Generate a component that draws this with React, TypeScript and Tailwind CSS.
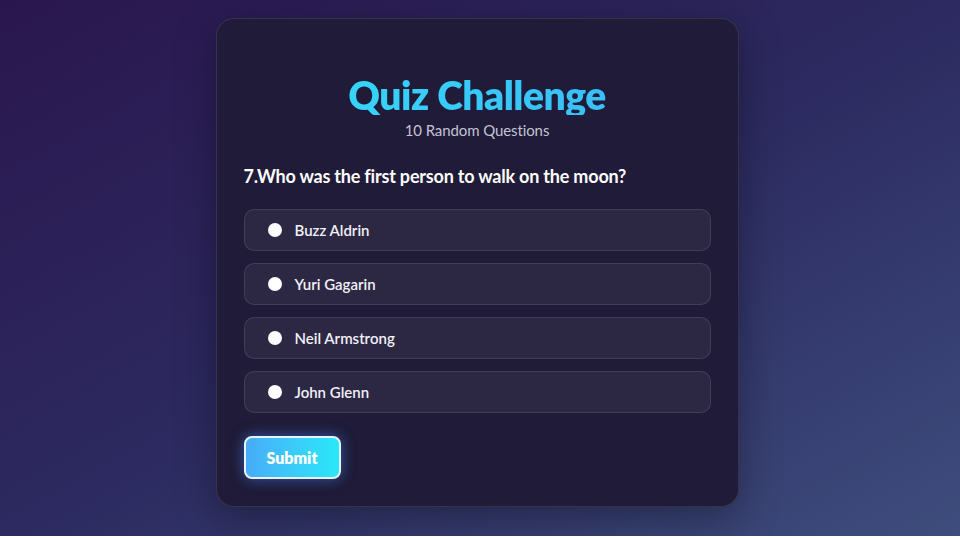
const OPTIONS = ["Buzz Aldrin", "Yuri Gagarin", "Neil Armstrong", "John Glenn"]

export default function App() {
  return (
    <div
      className="h-[536px] w-full bg-gradient-to-br from-[#2a164f] via-[#2c2a60] to-[#3e4d7d] pt-[18px]"
      style={{ fontFamily: "Lato, 'Noto Sans', sans-serif" }}
    >
      <div className="mx-auto w-[523px] -translate-x-[3px] rounded-[18px] border border-white/10 bg-[#1f1b38] px-[27px] pt-[28px] pb-[27px] shadow-[0_10px_40px_rgba(0,0,0,0.35)]">
        <h1 className="mt-[28px] bg-gradient-to-r from-[#35dcf8] to-[#3bb6f6] bg-clip-text text-center text-[39px] leading-[40px] font-extrabold tracking-[-0.5px] text-transparent">
          Quiz Challenge
        </h1>
        <p className="mt-[3px] text-center text-[15px] leading-[24px] tracking-[-0.1px] text-[#c4c3d4]">
          10 Random Questions
        </p>

        <h2 className="mt-[20px] text-[18px] leading-[28px] font-bold tracking-[-0.2px] text-white">
          7.Who was the first person to walk on the moon?
        </h2>

        <div className="mt-[19px] flex flex-col gap-3">
          {OPTIONS.map((opt) => (
            <label
              key={opt}
              className="flex h-[42px] items-center gap-[13px] rounded-[10px] border border-white/10 bg-white/[0.06] pl-[23px]"
            >
              <span className="h-[14px] w-[14px] rounded-full bg-white" />
              <span className="text-[15px] font-semibold text-[#f1f0f6]">{opt}</span>
            </label>
          ))}
        </div>

        <button className="mt-[23px] h-[43px] w-[97px] rounded-[8px] border-2 border-[#e6f3ff] bg-gradient-to-r from-[#47acf8] to-[#27e8f8] text-[16px] font-extrabold text-white shadow-[0_0_14px_rgba(70,140,255,0.55)]">
          Submit
        </button>
      </div>
    </div>
  )
}
